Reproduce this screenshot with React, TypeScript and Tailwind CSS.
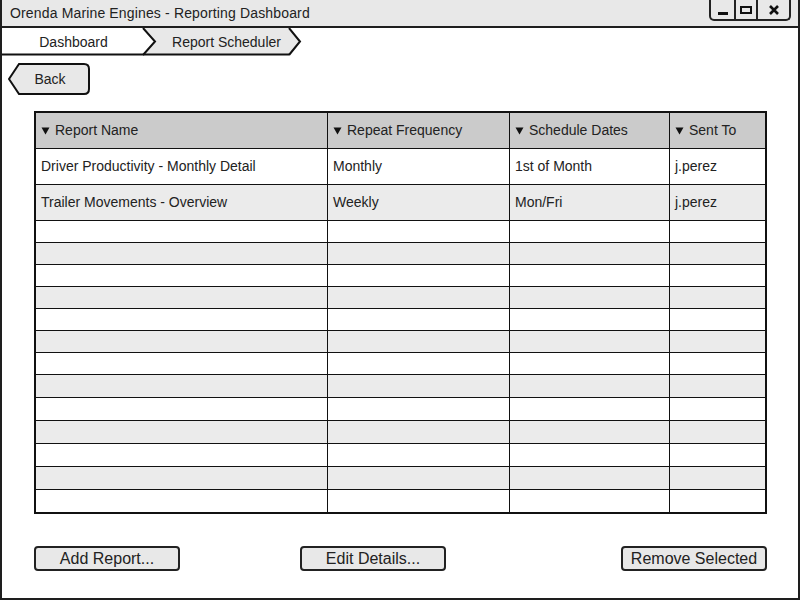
import React from 'react'

const font = { fontFamily: '"Liberation Sans", Arial, sans-serif' }

const columns = [
  { label: 'Report Name', width: 'w-[292px]' },
  { label: 'Repeat Frequency', width: 'w-[182px]' },
  { label: 'Schedule Dates', width: 'w-[160px]' },
  { label: 'Sent To', width: 'flex-1' },
]

const reports = [
  ['Driver Productivity - Monthly Detail', 'Monthly', '1st of Month', 'j.perez'],
  ['Trailer Movements - Overview', 'Weekly', 'Mon/Fri', 'j.perez'],
]

// empty rows below the data, heights taken from the mockup
const emptyRows = [22, 22, 22, 22, 22, 22, 22, 23, 23, 23, 23, 23, 22]

function SortArrow() {
  return (
    <svg width="9" height="8" viewBox="0 0 9 8" className="mr-[5px] shrink-0">
      <path d="M0.5 0.5 L8.5 0.5 L4.5 7.5 Z" fill="#111" />
    </svg>
  )
}

function WindowControls() {
  return (
    <div className="mr-[7px] flex h-[21px] w-[82px] shrink-0 self-start rounded-b-[5px] border-2 border-t-0 border-[#222] bg-[#e8e8e8]">
      <div className="flex w-[25px] items-end justify-center border-r-2 border-[#222] pb-[4px]">
        <div className="h-[3px] w-[10px] bg-[#111]" />
      </div>
      <div className="flex w-[22px] items-center justify-center border-r-2 border-[#222]">
        <div className="h-[8px] w-[12px] border-2 border-[#111]" />
      </div>
      <div className="flex flex-1 items-center justify-center">
        <svg width="10" height="10" viewBox="0 0 10 10">
          <path d="M1 1 L9 9 M9 1 L1 9" stroke="#111" strokeWidth="2.6" />
        </svg>
      </div>
    </div>
  )
}

function Breadcrumb() {
  return (
    <div className="relative h-[28px] w-[300px] text-[14px] text-[#222]">
      <svg width="300" height="28" className="absolute inset-0">
        <path d="M141 0 L287 0 L298 13.5 L287 27 L141 27 L153 13.5 Z" fill="#e8e8e8" />
        <path d="M0 0 L141 0 L153 13.5 L141 27 L0 27 Z" fill="#ffffff" />
        <path d="M141 0 L153 13.5 L141 27" stroke="#111" strokeWidth="2" fill="none" />
        <path d="M287 0 L298 13.5 L287 27" stroke="#111" strokeWidth="2" fill="none" />
        <path d="M0 26.5 L287 26.5" stroke="#111" strokeWidth="2" />
      </svg>
      <div className="relative flex h-full items-center">
        <span className="w-[143px] text-center">Dashboard</span>
        <span className="w-[155px] pl-[8px] text-center">Report Scheduler</span>
      </div>
    </div>
  )
}

function BackButton() {
  return (
    <button className="relative ml-[6px] mt-[7px] flex h-[32px] w-[82px] items-center justify-center text-[14px] text-[#222]">
      <svg width="82" height="32" viewBox="0 0 82 32" className="absolute inset-0">
        <path
          d="M11 1 L76 1 Q81 1 81 6 L81 26 Q81 31 76 31 L11 31 L1 16 Z"
          fill="#e8e8e8"
          stroke="#111"
          strokeWidth="2"
        />
      </svg>
      <span className="relative pl-[2px]">Back</span>
    </button>
  )
}

function Cell({ width, last, children }: { width: string; last?: boolean; children?: React.ReactNode }) {
  return (
    <div className={`${width} flex h-full items-center px-[5px] ${last ? '' : 'border-r border-[#111]'}`}>
      {children}
    </div>
  )
}

function ActionButton({ label, className = '' }: { label: string; className?: string }) {
  return (
    <button
      className={`h-[25px] w-[146px] rounded-[4px] border-2 border-[#222] bg-[#e8e8e8] text-[16px] leading-none text-[#222] ${className}`}
    >
      {label}
    </button>
  )
}

export default function App() {
  return (
    <div style={font} className="flex h-[600px] w-[800px] flex-col border-x-2 border-b-2 border-[#1e1e1e] bg-white">
      <div className="flex h-[28px] shrink-0 items-center justify-between border-b-2 border-[#1e1e1e] bg-[#e8e8e8]">
        <span className="pl-[8px] text-[14px] tracking-[0.15px] text-[#222]">
          Orenda Marine Engines - Reporting Dashboard
        </span>
        <WindowControls />
      </div>

      <Breadcrumb />

      <div className="flex">
        <BackButton />
      </div>

      <div className="ml-[32px] mt-[16px] w-[733px] border-2 border-[#111] text-[14px] text-[#222]">
        <div className="flex h-[36px] border-b border-[#111] bg-[#cbcbcb]">
          {columns.map((c, i) => (
            <Cell key={c.label} width={c.width} last={i === columns.length - 1}>
              <SortArrow />
              {c.label}
            </Cell>
          ))}
        </div>
        {reports.map((r, ri) => (
          <div key={ri} className={`flex h-[36px] border-b border-[#111] ${ri % 2 ? 'bg-[#ebebeb]' : 'bg-white'}`}>
            {r.map((v, i) => (
              <Cell key={i} width={columns[i].width} last={i === r.length - 1}>
                {v}
              </Cell>
            ))}
          </div>
        ))}
        {emptyRows.map((h, ri) => (
          <div
            key={ri}
            style={{ height: h }}
            className={`flex ${ri === emptyRows.length - 1 ? '' : 'border-b border-[#111]'} ${ri % 2 ? 'bg-[#ebebeb]' : 'bg-white'}`}
          >
            {columns.map((c, i) => (
              <Cell key={i} width={c.width} last={i === columns.length - 1} />
            ))}
          </div>
        ))}
      </div>

      <div className="ml-[32px] mt-[32px] flex w-[733px]">
        <ActionButton label="Add Report..." />
        <ActionButton label="Edit Details..." className="ml-[120px]" />
        <ActionButton label="Remove Selected" className="ml-auto" />
      </div>
    </div>
  )
}
